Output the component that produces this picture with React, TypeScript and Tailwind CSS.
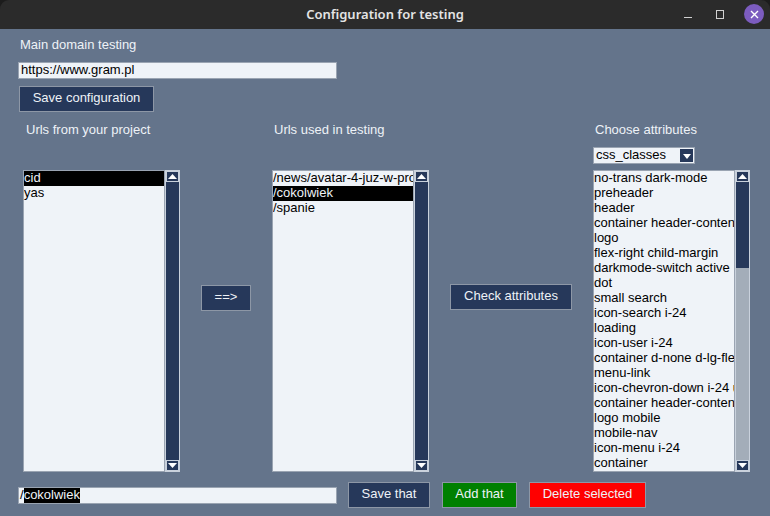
import React from "react";

const font = { fontFamily: '"Liberation Sans", Arial, sans-serif' };

function ArrowBox({ up }: { up: boolean }) {
  return (
    <div className="h-[11px] w-full border border-[#c9d1dc] bg-[#26385a] flex items-center justify-center">
      <svg width="9" height="5" viewBox="0 0 9 5">
        {up ? <polygon points="0,5 9,5 4.5,0" fill="#ffffff" /> : <polygon points="0,0 9,0 4.5,5" fill="#ffffff" />}
      </svg>
    </div>
  );
}

function ListBox({ items, selected, thumbH }: { items: string[]; selected?: number; thumbH?: number }) {
  return (
    <div className="flex h-[302px]">
      <div className="w-[142px] h-full bg-[#eff3f8] border border-[#9aa4b2] overflow-x-clip">
        {items.map((t, i) => (
          <div
            key={i}
            className={`h-[15px] leading-[14px] text-[13px] whitespace-nowrap overflow-x-clip ${
              i === selected ? "bg-black text-[#eef2f7]" : "text-black"
            }`}
          >
            {t}
          </div>
        ))}
      </div>
      <div className="w-[15px] h-full border border-[#c9d1dc] bg-[#a3adb9] flex flex-col">
        <ArrowBox up />
        <div className="flex-1 flex flex-col">
          <div
            className="bg-[#26385a]"
            style={{ height: thumbH === undefined ? "100%" : `${thumbH}px` }}
          />
        </div>
        <ArrowBox up={false} />
      </div>
    </div>
  );
}

function Btn({ children, className }: { children: React.ReactNode; className: string }) {
  return (
    <div
      className={`h-[26px] pb-[2px] flex items-center justify-center text-[13px] text-[#eef2f7] border border-[#8d97a6] ${className}`}
    >
      {children}
    </div>
  );
}

export default function App() {
  const attrs = [
    "no-trans dark-mode",
    "preheader",
    "header",
    "container header-content",
    "logo",
    "flex-right child-margin",
    "darkmode-switch active",
    "dot",
    "small search",
    "icon-search i-24",
    "loading",
    "icon-user i-24",
    "container d-none d-lg-flex",
    "menu-link",
    "icon-chevron-down i-24 u",
    "container header-content",
    "logo mobile",
    "mobile-nav",
    "icon-menu i-24",
    "container",
  ];
  return (
    <div className="w-[770px] h-[516px] bg-[#1c1c1c] overflow-hidden" style={font}>
      <div className="h-[29px] bg-[#2b2b2b] rounded-t-[9px] flex items-center relative">
        <div
          className="flex-1 text-center text-[13px] font-semibold text-[#e4e4e4]"
          style={{ fontFamily: '"Noto Sans", "DejaVu Sans", sans-serif' }}
        >
          Configuration for testing
        </div>
        <div className="absolute right-[6px] top-[4px] flex items-center gap-[18px]">
          <div className="w-[8px] h-[1px] bg-[#d0d0d0] mt-[6px]" />
          <div className="w-[8px] h-[9px] border border-[#d0d0d0] ml-[6px]" />
          <div className="w-[20px] h-[20px] rounded-full bg-[#7c5cbf] flex items-center justify-center ml-[2px]">
            <svg width="9" height="9" viewBox="0 0 9 9">
              <path d="M1 1 L8 8 M8 1 L1 8" stroke="#ffffff" strokeWidth="1.4" />
            </svg>
          </div>
        </div>
      </div>
      <div className="h-[487px] bg-[#64748b] flex flex-col text-[13px]">
        <div className="pl-[20px] pt-[8px] h-[23px] leading-[15px] text-[#eef2f7]">Main domain testing</div>
        <div className="ml-[18px] mt-[10px] w-[319px] h-[17px] bg-[#eff3f8] border border-[#9aa4b2] text-black leading-[13px] pl-[2px]">
          https://www.gram.pl
        </div>
        <Btn className="ml-[19px] mt-[7px] w-[135px] bg-[#26385a]">Save configuration</Btn>
        <div className="mt-[10px] h-[15px] leading-[15px] text-[#eef2f7] flex">
          <div className="ml-[26px] w-[248px]">Urls from your project</div>
          <div className="w-[321px]">Urls used in testing</div>
          <div>Choose attributes</div>
        </div>
        <div className="mt-[10px] h-[17px] ml-[593px] w-[102px] bg-[#eff3f8] border border-[#9aa4b2] flex">
          <div className="flex-1 text-black leading-[13px] pl-[2px] text-[13px]">css_classes</div>
          <div className="w-[13px] h-[13px] mt-[1px] mr-[1px] bg-[#26385a] flex items-end justify-center pb-[3px]">
            <svg width="8" height="5" viewBox="0 0 8 5">
              <polygon points="0,0 8,0 4,5" fill="#ffffff" />
            </svg>
          </div>
        </div>
        <div className="mt-[6px] flex items-start">
          <div className="ml-[23px]">
            <ListBox items={["cid", "yas"]} selected={0} />
          </div>
          <Btn className="ml-[21px] mt-[115px] w-[50px] bg-[#26385a]">==&gt;</Btn>
          <div className="ml-[21px]">
            <ListBox items={["/news/avatar-4-juz-w-produkcji", "/cokolwiek", "/spanie"]} selected={1} />
          </div>
          <Btn className="ml-[21px] mt-[114px] w-[122px] bg-[#26385a]">Check attributes</Btn>
          <div className="ml-[21px]">
            <ListBox items={attrs} thumbH={86} />
          </div>
        </div>
        <div className="mt-[10px] flex items-center">
          <div className="ml-[18px] w-[319px] h-[17px] bg-[#eff3f8] border border-[#9aa4b2] text-black leading-[13px] pl-[1px] flex">
            <span>/</span>
            <span className="bg-black text-[#eef2f7]">cokolwiek</span>
          </div>
          <Btn className="ml-[11px] w-[82px] bg-[#26385a]">Save that</Btn>
          <Btn className="ml-[12px] w-[75px] bg-[#008000]">Add that</Btn>
          <Btn className="ml-[12px] w-[117px] bg-[#ff0000]">Delete selected</Btn>
        </div>
      </div>
    </div>
  );
}
